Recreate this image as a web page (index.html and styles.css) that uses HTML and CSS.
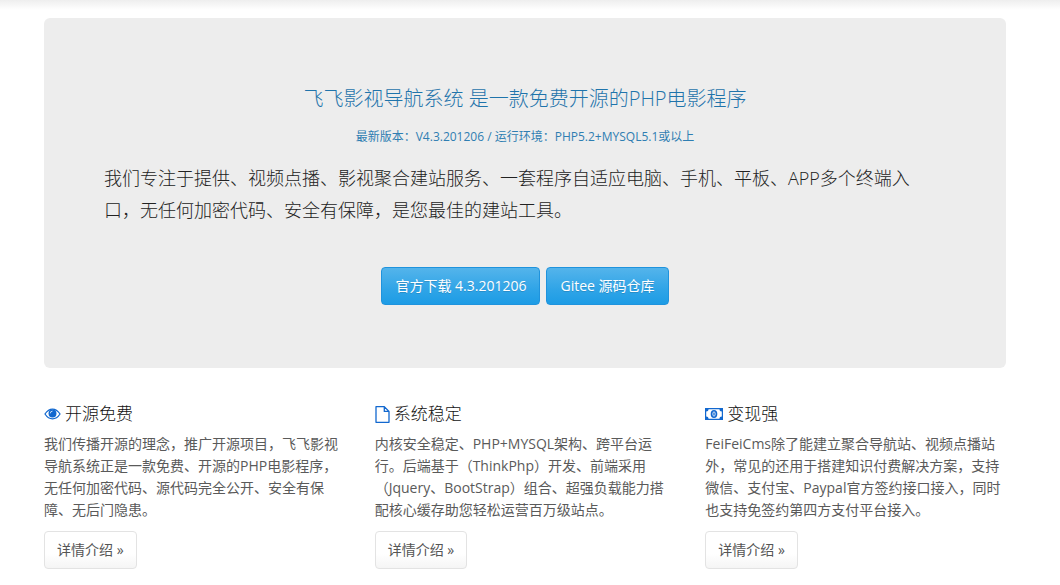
FILE: index.html
```
<!DOCTYPE html>
<html lang="zh-CN">
<head>
<meta charset="utf-8">
<meta name="viewport" content="width=device-width, initial-scale=1">
<title>飞飞影视导航系统</title>
<link rel="stylesheet" href="styles.css">
</head>
<body>
<main class="container">
  <section class="jumbotron">
    <h1 class="jumbotron-title">飞飞影视导航系统 是一款免费开源的PHP电影程序</h1>
    <p class="jumbotron-version">最新版本：V4.3.201206 / 运行环境：PHP5.2+MYSQL5.1或以上</p>
    <p class="jumbotron-lead">我们专注于提供、视频点播、影视聚合建站服务、一套程序自适应电脑、手机、平板、APP多个终端入<br>口，无任何加密代码、安全有保障，是您最佳的建站工具。</p>
    <div class="jumbotron-actions">
      <a class="btn btn-primary" href="#download">官方下载 4.3.201206</a>
      <a class="btn btn-primary" href="#gitee">Gitee 源码仓库</a>
    </div>
  </section>
  <div class="features">
    <section class="feature">
      <h2 class="feature-title">
        <svg class="icon icon-eye" viewBox="0 0 18 14" aria-hidden="true"><path d="M1 7Q4.500 1.800 9 1.800T17 7Q13.500 12.200 9 12.200T1 7Z" fill="none" stroke="currentColor" stroke-width="1.300"/><circle cx="9" cy="6.500" r="4.200" fill="currentColor"/><path d="M6.700 6.300A2.300 2.300 0 0 1 9 4" fill="none" stroke="#fff" stroke-width=".8"/></svg>
        开源免费</h2>
      <p class="feature-text">我们传播开源的理念，推广开源项目，飞飞影视导航系统正是一款免费、开源的PHP电影程序，无任何加密代码、源代码完全公开、安全有保障、无后门隐患。</p>
      <a class="btn btn-default" href="#free">详情介绍 »</a>
    </section>
    <section class="feature">
      <h2 class="feature-title">
        <svg class="icon icon-file" viewBox="0 0 15 17" aria-hidden="true"><path d="M1 .7H9.300L14 5.400V16.300H1ZM9.300.7V5.400H14" fill="none" stroke="currentColor" stroke-width="1.300" stroke-linejoin="round"/></svg>
        系统稳定</h2>
      <p class="feature-text">内核安全稳定、PHP+MYSQL架构、跨平台运行。后端基于（ThinkPhp）开发、前端采用（Jquery、BootStrap）组合、超强负载能力搭<br>配核心缓存助您轻松运营百万级站点。</p>
      <a class="btn btn-default" href="#stable">详情介绍 »</a>
    </section>
    <section class="feature">
      <h2 class="feature-title">
        <svg class="icon icon-money" viewBox="0 0 18 12" aria-hidden="true"><path fill="currentColor" fill-rule="evenodd" d="M0 0H18V12H0ZM3.600 1.200A2.400 2.400 0 0 1 1.200 3.600V8.400A2.400 2.400 0 0 1 3.600 10.800H14.400A2.400 2.400 0 0 1 16.800 8.400V3.600A2.400 2.400 0 0 1 14.400 1.200Z"/><ellipse cx="9" cy="6" rx="3.300" ry="4" fill="currentColor"/><ellipse cx="9" cy="6" rx="1.200" ry="2.200" fill="none" stroke="#fff" stroke-width=".8"/></svg>
        变现强</h2>
      <p class="feature-text">FeiFeiCms除了能建立聚合导航站、视频点播站外，常见的还用于搭建知识付费解决方案，支持微信、支付宝、Paypal官方签约接口接入，同时也支持免签约第四方支付平台接入。</p>
      <a class="btn btn-default" href="#revenue">详情介绍 »</a>
    </section>
  </div>
</main>
</body>
</html>
```
FILE: styles.css
```
* { box-sizing: border-box; }
body {
  margin: 0;
  background: #fff linear-gradient(#eee, #fff) top / 100% 10px no-repeat;
  color: #5a5a5a;
  font: 400 14px/22px "Open Sans", "Noto Sans CJK SC", sans-serif;
}
h1, h2, p { margin: 0; font-weight: 400; }
.container { padding: 18px 54px 16px 44px; }
.jumbotron {
  padding: 69px 60px 63px;
  border-radius: 6px;
  background: #ededed;
  text-align: center;
}
.jumbotron-title,
.jumbotron-lead,
.feature-title {
  font-family: "Open Sans", "Noto Sans CJK SC Light", "Noto Sans CJK SC", sans-serif;
  font-weight: 300;
}
.jumbotron-title { color: #1f74ab; font-size: 20px; line-height: 24px; }
.jumbotron-version {
  margin-top: 16px;
  color: #2f7eb2;
  font-size: 12px;
  line-height: 20px;
}
.jumbotron-lead {
  margin-top: 15px;
  color: #222;
  font-size: 18px;
  line-height: 32px;
  text-align: left;
}
.jumbotron-actions { display: flex; justify-content: center; gap: 6px; margin-top: 41px; }
.btn {
  display: inline-block;
  padding: 7px 12px;
  border: 1px solid;
  border-radius: 4px;
  text-decoration: none;
  white-space: nowrap;
}
.btn-primary {
  padding: 7px 13px;
  border-color: #1f93dd;
  background: linear-gradient(#54b4eb, #2fa4e7 60%, #1d9ce5);
  color: #fff;
  text-shadow: 0 1px 0 rgba(0, 0, 0, .15);
}
.btn-default {
  margin-top: 10px;
  border-color: #e3e3e3;
  background: linear-gradient(#fff, #fff 60%, #f5f5f5);
  color: #555;
}
.features { display: grid; grid-template-columns: repeat(3, 1fr); gap: 30px; margin-top: 36px; }
.feature-title {
  display: flex;
  align-items: center;
  gap: 4px;
  height: 20px;
  margin-bottom: 9px;
  color: #111;
  font-size: 17px;
  line-height: 20px;
}
.icon { flex: none; color: #1268cf; }
.icon-eye { width: 17px; height: 14px; }
.icon-file { width: 15px; height: 17px; }
.icon-money { width: 18px; height: 12px; }
```
